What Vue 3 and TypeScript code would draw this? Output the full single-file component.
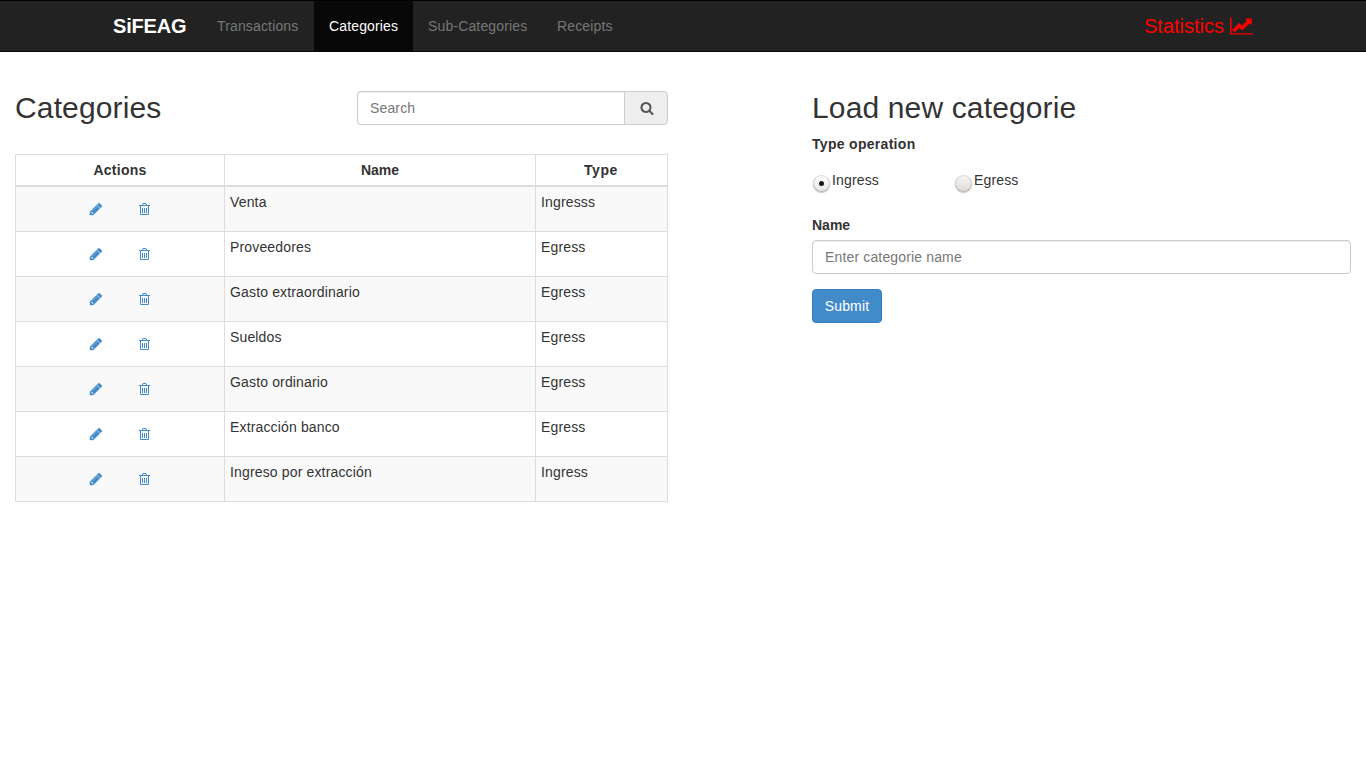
<script setup lang="ts">
import { ref } from 'vue'

interface Category {
  name: string
  type: string
}

const navItems = [
  { label: 'Transactions', cls: 'transactions' },
  { label: 'Categories', cls: 'categories' },
  { label: 'Sub-Categories', cls: 'subcategories' },
  { label: 'Receipts', cls: 'receipts' },
]
const active = ref('Categories')

const categories = ref<Category[]>([
  { name: 'Venta', type: 'Ingresss' },
  { name: 'Proveedores', type: 'Egress' },
  { name: 'Gasto extraordinario', type: 'Egress' },
  { name: 'Sueldos', type: 'Egress' },
  { name: 'Gasto ordinario', type: 'Egress' },
  { name: 'Extracción banco', type: 'Egress' },
  { name: 'Ingreso por extracción', type: 'Ingress' },
])

const search = ref('')
const operation = ref('Ingress')
const categoryName = ref('')
</script>

<template>
  <nav class="navbar">
    <div class="container">
      <a class="brand">SiFEAG</a>
      <ul class="nav">
        <li v-for="item in navItems" :key="item.label" :class="[item.cls, { active: item.label === active }]" @click="active = item.label">
          <a>{{ item.label }}</a>
        </li>
      </ul>
      <a class="statistics">
        <span>Statistics</span>
        <svg viewBox="0 0 2048 1792"><path d="M2048 1536v128h-2048v-1536h128v1408h1920z" /><path class="trend" d="M1920 288v435q0 21-19.500 29.500t-35.500-7.500l-121-121-633 633q-10 10-23 10t-23-10l-233-233-416 416-192-192 585-585q10-10 23-10t23 10l233 233 464-464-121-121q-16-16-7.500-35.500t29.500-19.500h435q14 0 23 9t9 23z" /></svg>
      </a>
    </div>
  </nav>

  <main class="page">
    <section class="list">
      <div class="list-head">
        <h2>Categories</h2>
        <div class="search">
          <input v-model="search" type="text" placeholder="Search" />
          <button type="button" aria-label="Search">
            <svg viewBox="0 0 1792 1792"><path d="M1216 832q0-185-131.500-316.500t-316.500-131.500-316.500 131.500-131.500 316.500 131.500 316.500 316.500 131.500 316.500-131.500 131.500-316.500zm512 832q0 52-38 90t-90 38q-54 0-90-38l-343-342q-179 124-399 124-143 0-273.500-55.500t-225-150-150-225-55.500-273.500 55.500-273.500 150-225 225-150 273.500-55.500 273.500 55.500 225 150 150 225 55.500 273.500q0 220-124 399l343 343q37 37 37 90z" /></svg>
          </button>
        </div>
      </div>

      <table>
        <colgroup>
          <col class="col-actions" />
          <col class="col-name" />
          <col class="col-type" />
        </colgroup>
        <thead>
          <tr>
            <th>Actions</th>
            <th class="th-name">Name</th>
            <th class="th-type">Type</th>
          </tr>
        </thead>
        <tbody>
          <tr v-for="c in categories" :key="c.name">
            <td>
              <div class="actions">
                <svg class="pencil" viewBox="0 0 1792 1792"><path d="M491 1536l91-91-235-235-91 91v107h128v128h107zm523-928q0-22-22-22-10 0-17 7l-542 542q-7 7-7 17 0 22 22 22 10 0 17-7l542-542q7-7 7-17zm-54-192l416 416-832 832h-416v-416zm683 96q0 53-37 90l-166 166-416-416 166-165q36-38 90-38 53 0 91 38l235 234q37 39 37 91z" /></svg>
                <svg viewBox="0 0 14 14"><path d="M1 3h3l.6-1.500q.2-.5.800-.5h2.200q.6 0 .8.500l.6 1.500h3v1h-1v8q0 1-1 1h-7q-1 0-1-1v-8h-1zM5 3h3l-.4-1h-2.200zM3 4v8h7v-8zM4 6h1v5h-1zM6 6h1v5h-1zM8 6h1v5h-1z" fill-rule="evenodd" /></svg>
              </div>
            </td>
            <td>{{ c.name }}</td>
            <td>{{ c.type }}</td>
          </tr>
        </tbody>
      </table>
    </section>

    <form class="editor" @submit.prevent>
      <h2>Load new categorie</h2>
      <span class="label label-type">Type operation</span>
      <div class="radios">
        <label v-for="o in ['Ingress', 'Egress']" :key="o" @click="operation = o">
          <i class="radio" :class="{ checked: operation === o }"></i><span>{{ o }}</span>
        </label>
      </div>
      <span class="label label-name">Name</span>
      <input v-model="categoryName" class="name-input" type="text" placeholder="Enter categorie name" />
      <button class="submit" type="submit">Submit</button>
    </form>
  </main>
</template>

<style>
body {
  margin: 0;
  background: #fff;
}
</style>

<style scoped>
* {
  box-sizing: border-box;
}
.navbar,
.page,
input,
button {
  font-family: 'Liberation Sans', Arial, sans-serif;
  font-size: 14px;
  line-height: 20px;
  letter-spacing: 0.15px;
}
svg {
  display: block;
  fill: currentColor;
}
.navbar {
  height: 52px;
  background: #222;
  border: solid #080808;
  border-width: 1px 0;
  border-top-color: #000;
}
.container {
  display: flex;
  width: 1170px;
  height: 50px;
  margin: 0 auto;
  color: #777;
}
.brand {
  width: 104px;
  padding: 15px 0 0 15px;
  color: #fff;
  font-size: 20px;
  font-weight: bold;
  letter-spacing: -0.2px;
}
.nav {
  display: flex;
  margin: 0;
  padding: 0;
  list-style: none;
}
.nav li {
  padding: 15px 0 15px 15px;
  white-space: nowrap;
  cursor: pointer;
}
.transactions { width: 112px; }
.categories { width: 99px; }
.subcategories { width: 129px; }
.receipts { width: 85px; }
.nav .active {
  color: #fff;
  background: #080808;
}
.statistics {
  display: flex;
  width: 124px;
  margin-left: auto;
  padding-top: 15px;
  color: #f00;
  font-size: 20px;
  letter-spacing: 0;
}
.statistics span {
  width: 86px;
}
.statistics svg {
  width: 22.86px;
  height: 20px;
}
.statistics .trend {
  stroke: currentColor;
  stroke-width: 60;
}
.page {
  display: flex;
  justify-content: space-between;
  padding: 39px 15px 0;
  color: #333;
}
.list {
  width: 653px;
}
.list-head {
  display: flex;
  justify-content: space-between;
  height: 63px;
}
h2 {
  margin: 0;
  font-size: 30px;
  font-weight: normal;
  line-height: 33px;
  letter-spacing: 0.14px;
}
.search {
  display: flex;
  width: 311px;
  height: 34px;
}
input {
  height: 34px;
  padding: 6px 12px;
  border: 1px solid #ccc;
  border-radius: 4px;
  box-shadow: inset 0 1px 1px rgba(0, 0, 0, 0.075);
  color: #555;
  outline: none;
}
input::placeholder {
  color: #777;
  opacity: 1;
}
.search input {
  width: 267px;
  border-right: 0;
  border-radius: 4px 0 0 4px;
}
.search button {
  display: flex;
  align-items: center;
  justify-content: center;
  width: 44px;
  padding: 0 0 0 1px;
  border: 1px solid #ccc;
  border-radius: 0 4px 4px 0;
  background: #eee;
  color: #555;
}
.search svg,
.actions svg {
  width: 14px;
  height: 14px;
}
table {
  width: 653px;
  table-layout: fixed;
  border-collapse: collapse;
}
.col-actions { width: 209px; }
.col-name { width: 311px; }
.col-type { width: 132px; }
th,
td {
  padding: 5px;
  border: 1px solid #ddd;
}
th {
  height: 31px;
  border-bottom-width: 2px;
  letter-spacing: 0.25px;
}
.th-name {
  letter-spacing: 0;
}
.th-type {
  padding-right: 6px;
  letter-spacing: 0.6px;
}
td {
  height: 45px;
  vertical-align: top;
}
tbody tr:nth-child(odd) {
  background: #f9f9f9;
}
.actions {
  display: flex;
  gap: 35px;
  padding: 10px 0 0 68px;
  color: #428bca;
}
.pencil path {
  stroke: currentColor;
  stroke-width: 50;
}
.editor {
  display: flex;
  flex-direction: column;
  align-items: flex-start;
  width: 539px;
}
.label {
  font-weight: bold;
  letter-spacing: 0.3px;
}
.label-name {
  letter-spacing: 0;
}
.label-type {
  margin-top: 10px;
}
.radios {
  display: flex;
  height: 20px;
  margin: 16px 0 25px;
}
.radios label {
  display: flex;
  width: 142px;
}
.radio {
  position: relative;
  width: 17px;
  height: 17px;
  margin: 5px 2px 0 1px;
  border: 1px solid #b5b3b0;
  border-top-color: #dedddb;
  border-right-color: #c9c7c5;
  border-left-color: #c9c7c5;
  border-radius: 50%;
  background: linear-gradient(#f4f4f3, #dfdddb);
  box-shadow: 0 1px 1px rgba(0, 0, 0, 0.25);
}
.radio.checked {
  background: linear-gradient(#fff, #e9e8e6);
}
.radio.checked::after {
  content: '';
  position: absolute;
  top: 5px;
  left: 5px;
  width: 5px;
  height: 5px;
  border-radius: 50%;
  background: #1a1a1a;
}
.name-input {
  width: 539px;
  margin: 5px 0 15px;
}
.submit {
  width: 70px;
  height: 34px;
  padding: 0;
  border: 1px solid #357ebd;
  border-radius: 4px;
  background: #428bca;
  color: #fff;
}
</style>
